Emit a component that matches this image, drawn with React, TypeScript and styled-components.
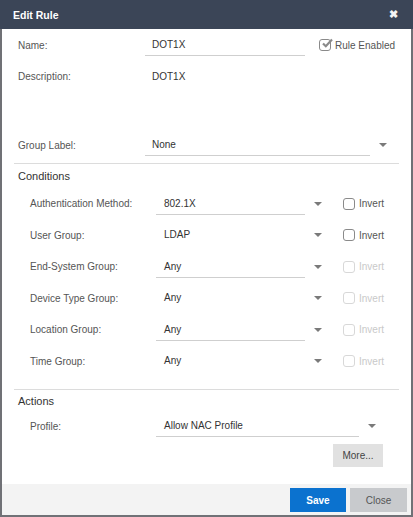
import React from "react";
import styled, { createGlobalStyle } from "styled-components";

const GlobalStyle = createGlobalStyle`
  html, body {
    margin: 0;
    padding: 0;
    background: #ffffff;
  }
  body {
    font-family: "Liberation Sans", Arial, sans-serif;
    font-size: 10px;
  }
`;

const Dialog = styled.div`
  width: 413px;
  height: 517px;
  box-sizing: border-box;
  border: 2px solid #707176;
  border-top: none;
  background: #ffffff;
  display: flex;
  flex-direction: column;
`;

const Header = styled.div`
  height: 29px;
  margin: 0 -2px;
  background: #3b4557;
  display: flex;
  align-items: center;
  justify-content: space-between;
  padding: 0 15px 0 13px;
  color: #ffffff;
`;

const Title = styled.div`
  font-weight: bold;
  font-size: 10.5px;
`;

const CloseX = styled.span`
  font-size: 11px;
  font-weight: bold;
  color: #f4f4f4;
`;

const Body = styled.div`
  flex: 1;
  padding: 0 12px;
  display: flex;
  flex-direction: column;
`;

const Row = styled.div<{ $indent?: number; $height: number }>`
  display: flex;
  align-items: center;
  height: ${(p) => p.$height}px;
  padding-left: ${(p) => p.$indent ?? 4}px;
  flex-shrink: 0;
  white-space: nowrap;
`;

const Label = styled.div<{ $width: number }>`
  width: ${(p) => p.$width}px;
  color: #555;
  flex-shrink: 0;
`;

const Input = styled.div<{ $width: number; $line?: boolean; $pad?: number }>`
  width: ${(p) => p.$width}px;
  height: 22px;
  box-sizing: border-box;
  padding-left: ${(p) => p.$pad ?? 7}px;
  display: flex;
  align-items: center;
  color: #333;
  border-bottom: 1px solid ${(p) => (p.$line ? "#cfcfcf" : "transparent")};
  flex-shrink: 0;
`;

const Plain = styled.div`
  color: #333;
  padding-left: 7px;
`;

const Arrow = styled.span`
  width: 0;
  height: 0;
  margin-left: 9px;
  border-left: 4px solid transparent;
  border-right: 4px solid transparent;
  border-top: 4px solid #7a7a7a;
  flex-shrink: 0;
`;

const Check = styled.label<{ $disabled?: boolean; $gap: number }>`
  display: flex;
  align-items: center;
  margin-left: ${(p) => p.$gap}px;
  color: ${(p) => (p.$disabled ? "#c9c9c9" : "#555")};
  gap: 4px;
`;

const Box = styled.span<{ $disabled?: boolean }>`
  width: 12px;
  height: 12px;
  box-sizing: border-box;
  border: 1px solid ${(p) => (p.$disabled ? "#d8d8d8" : "#8a8a8a")};
  border-radius: 3px;
  position: relative;
  display: inline-block;
`;

const Tick = styled.svg`
  position: absolute;
  left: 1px;
  top: -3px;
`;

const Divider = styled.div<{ $top: number }>`
  height: 1px;
  background: #dcdcdc;
  margin-top: ${(p) => p.$top}px;
  flex-shrink: 0;
`;

const SectionTitle = styled.div<{ $height: number }>`
  height: ${(p) => p.$height}px;
  display: flex;
  align-items: center;
  padding-left: 4px;
  font-size: 11px;
  color: #333;
  flex-shrink: 0;
`;

const Spacer = styled.div<{ $h: number }>`
  height: ${(p) => p.$h}px;
  flex-shrink: 0;
`;

const MoreRow = styled.div`
  display: flex;
  justify-content: flex-end;
  padding-right: 16px;
  margin-top: 3px;
`;

const GreyButton = styled.button`
  height: 23px;
  width: 50px;
  border: none;
  background: #e1e1e1;
  color: #444;
  font-family: inherit;
  font-size: 10px;
  padding: 0;
`;

const Footer = styled.div`
  height: 31px;
  background: #f3f3f3;
  display: flex;
  justify-content: flex-end;
  align-items: flex-start;
  padding: 4px 4px 0 0;
  box-sizing: border-box;
  gap: 4px;
`;

const FooterButton = styled.button<{ $primary?: boolean }>`
  height: 24px;
  width: ${(p) => (p.$primary ? 56 : 57)}px;
  border: none;
  padding: 0;
  font-family: inherit;
  font-size: 10px;
  font-weight: ${(p) => (p.$primary ? "bold" : "normal")};
  background: ${(p) => (p.$primary ? "#0b72cf" : "#c8cacd")};
  color: ${(p) => (p.$primary ? "#ffffff" : "#555")};
`;

type Cond = { label: string; value: string; line: boolean; enabled: boolean };

const conditions: Cond[] = [
  { label: "Authentication Method:", value: "802.1X", line: true, enabled: true },
  { label: "User Group:", value: "LDAP", line: false, enabled: true },
  { label: "End-System Group:", value: "Any", line: true, enabled: false },
  { label: "Device Type Group:", value: "Any", line: false, enabled: false },
  { label: "Location Group:", value: "Any", line: true, enabled: false },
  { label: "Time Group:", value: "Any", line: false, enabled: false },
];

export default function App() {
  return (
    <>
      <GlobalStyle />
      <Dialog>
        <Header>
          <Title>Edit Rule</Title>
          <CloseX>✖</CloseX>
        </Header>
        <Body>
          <Row $height={32}>
            <Label $width={127}>Name:</Label>
            <Input $width={160} $line>DOT1X</Input>
            <Check $gap={14}>
              <Box>
                <Tick width="12" height="12" viewBox="0 0 12 12">
                  <path d="M2 6.5 L4.8 9.2 L11 2.5" fill="none" stroke="#8a8a8a" strokeWidth="2.2" />
                </Tick>
              </Box>
              Rule Enabled
            </Check>
          </Row>
          <Row $height={30}>
            <Label $width={127}>Description:</Label>
            <Plain>DOT1X</Plain>
          </Row>
          <Spacer $h={39} />
          <Row $height={30}>
            <Label $width={127}>Group Label:</Label>
            <Input $width={225} $line>None</Input>
            <Arrow />
          </Row>
          <Divider $top={3} />
          <SectionTitle $height={24}>Conditions</SectionTitle>
          {conditions.map((c) => (
            <Row key={c.label} $height={31.5} $indent={16}>
              <Label $width={126}>{c.label}</Label>
              <Input $width={149} $line={c.line} $pad={8}>{c.value}</Input>
              <Arrow />
              <Check $gap={21} $disabled={!c.enabled}>
                <Box $disabled={!c.enabled} />
                Invert
              </Check>
            </Row>
          ))}
          <Divider $top={12} />
          <SectionTitle $height={21}>Actions</SectionTitle>
          <Row $height={30} $indent={16}>
            <Label $width={126}>Profile:</Label>
            <Input $width={203} $line $pad={8}>Allow NAC Profile</Input>
            <Arrow />
          </Row>
          <MoreRow>
            <GreyButton>More...</GreyButton>
          </MoreRow>
        </Body>
        <Footer>
          <FooterButton $primary>Save</FooterButton>
          <FooterButton>Close</FooterButton>
        </Footer>
      </Dialog>
    </>
  );
}
